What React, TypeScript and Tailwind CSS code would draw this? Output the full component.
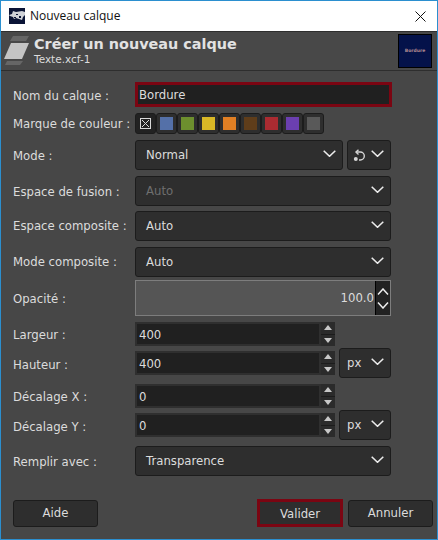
import React from "react";

const dv = { fontFamily: '"DejaVu Sans", sans-serif' };

function Chevron({ className = "" }: { className?: string }) {
  return (
    <svg width="13" height="7" viewBox="0 0 13 7" className={className} fill="none" stroke="#ececec" strokeWidth="1.5">
      <path d="M.7.7l5.8 5.6L12.3.7" />
    </svg>
  );
}

function Combo({ text, disabled, className }: { text: string; disabled?: boolean; className: string }) {
  return (
    <div className={`flex items-center justify-between rounded-[3px] border border-[#1c1c1c] bg-[#2e2e2e] pr-[6px] ${className}`}>
      <span className={`pt-[2px] ${disabled ? "text-[#6f6f6f]" : "text-[#dcdcdc]"}`}>{text}</span>
      <Chevron className="mb-[3px]" />
    </div>
  );
}

function Spin({ value }: { value: string }) {
  return (
    <div className="flex h-[24px] w-[200px]">
      <div className="flex flex-1 items-center border-2 border-[#2f2f2f] bg-[#202020] pl-[2px] pt-[3px] text-[#dcdcdc]">{value}</div>
      <div className="flex w-[14px] flex-col gap-[1px] bg-[#1c1c1c]">
        <div className="flex flex-1 items-center justify-center bg-[#2b2b2b]">
          <svg width="8" height="5" viewBox="0 0 8 5"><path d="M4 0l4 5H0z" fill="#c8c8c8" /></svg>
        </div>
        <div className="flex flex-1 items-center justify-center bg-[#2b2b2b]">
          <svg width="8" height="5" viewBox="0 0 8 5"><path d="M4 5l4-5H0z" fill="#c8c8c8" /></svg>
        </div>
      </div>
    </div>
  );
}

function Label({ children, className = "pt-[3px]" }: { children: string; className?: string }) {
  return <div className={`w-[122px] shrink-0 whitespace-nowrap text-[#dcdcdc] ${className}`}>{children}</div>;
}

const swatches = ["#5470a8", "#6d8f2e", "#d9b826", "#e07f24", "#5f3d1a", "#ab2b31", "#6b3fb0", "#595959"];

export default function App() {
  return (
    <div className="flex h-[540px] w-[438px] flex-col overflow-hidden border border-[#2b8fcf] bg-[#474747] text-[11.7px]" style={dv}>
      {/* Title bar */}
      <div className="flex h-[30px] shrink-0 items-center bg-white pl-[8px] pr-[11px]" style={{ fontFamily: '"Open Sans", sans-serif' }}>
        <svg width="16" height="16" viewBox="0 0 16 16">
          <rect width="16" height="16" fill="#0a1436" />
          <path d="M0 7l3-1 1-3 3 1 6-1 3 1v3l-2 2-1 3-3-1-3-1-2 1-1-2-3-1z" fill="#cfd2d8" />
          <rect x="7" y="6" width="2" height="1" fill="#0a1436" />
          <rect x="10" y="8" width="2" height="2" fill="#0a1436" />
          <rect x="5" y="9" width="2" height="1" fill="#0a1436" />
        </svg>
        <span className="ml-[5px] flex-1 text-[12px] text-[#111]">Nouveau calque</span>
        <svg width="11" height="11" viewBox="0 0 11 11" stroke="#111" strokeWidth="1"><path d="M0.5 0.5l10 10M10.5 0.5l-10 10" /></svg>
      </div>

      {/* Header */}
      <div className="flex h-[40px] shrink-0 items-center border-y border-[#2e2e2e] bg-[#484848] pl-[3px] pr-[5px]">
        <svg width="25" height="30" viewBox="0 0 25 30">
          <path d="M9 0h16l-3 5H6z" fill="#666" />
          <path d="M7 7h18l-7 16H0z" fill="#c4c4c4" />
          <path d="M3 25h16l-3 4H1z" fill="#666" />
        </svg>
        <div className="ml-[5px] flex flex-1 flex-col">
          <span className="text-[14.4px] font-bold leading-[17px] text-[#e2e2e2]">Créer un nouveau calque</span>
          <span className="text-[10.5px] leading-[13px] text-[#dcdcdc]">Texte.xcf-1</span>
        </div>
        <div className="flex h-[34px] w-[34px] items-center justify-center border border-black bg-[#04124a]">
          <span className="text-[4.5px] font-bold leading-none text-[#b08a90]">Bordure</span>
        </div>
      </div>

      {/* Form */}
      <div className="flex flex-1 flex-col pl-[12px] pr-[46px]">
        <div className="mt-[11px] flex h-[25px] items-center">
          <Label className="pt-[4px]">Nom du calque :</Label>
          <div className="flex h-[25px] w-[257px] shrink-0 items-center border-[3px] border-[#7b0512] bg-[#202020] pl-[1px] pt-[3px] text-[#dcdcdc]">Bordure</div>
        </div>

        <div className="mt-[6px] flex h-[21px] items-center">
          <Label className="pt-[2px]">Marque de couleur :</Label>
          <div className="flex">
            <div className="flex h-[21px] w-[21px] items-center justify-center rounded-[3px] border border-[#1c1c1c] bg-[#222]">
              <svg width="11" height="11" viewBox="0 0 11 11" fill="none" stroke="#d8d8d8" strokeWidth="1"><rect x="0.5" y="0.5" width="10" height="10" /><path d="M2 2l7 7M9 2l-7 7" /></svg>
            </div>
            {swatches.map((c) => (
              <div key={c} className="flex h-[21px] w-[21px] items-center justify-center rounded-[3px] border border-[#1c1c1c] bg-[#2e2e2e]">
                <div className="h-[13px] w-[13px]" style={{ backgroundColor: c }} />
              </div>
            ))}
          </div>
        </div>

        <div className="mt-[6px] flex h-[30px] items-center">
          <Label>Mode :</Label>
          <Combo text="Normal" className="h-[30px] w-[208px] pl-[10px]" />
          <div className="ml-[4px] flex h-[30px] w-[44px] items-center justify-between rounded-[3px] border border-[#1c1c1c] bg-[#2e2e2e] pl-[5px] pr-[6px]">
            <svg width="13" height="13" viewBox="0 0 13 13" fill="none" stroke="#d6d6d6" strokeWidth="1.4">
              <path d="M3.5 3h3.8a3.9 3.9 0 0 1 0 8H6" />
              <path d="M5.5.8L3 3l2.5 2.4" />
              <circle cx="2.8" cy="10" r="2" fill="#d6d6d6" stroke="none" />
            </svg>
            <Chevron className="mb-[3px]" />
          </div>
        </div>

        <div className="mt-[6px] flex h-[30px] items-center">
          <Label>Espace de fusion :</Label>
          <Combo text="Auto" disabled className="h-[30px] w-[256px] pl-[10px]" />
        </div>
        <div className="mt-[5px] flex h-[30px] items-center">
          <Label className="pt-[2px]">Espace composite :</Label>
          <Combo text="Auto" className="h-[30px] w-[256px] pl-[10px]" />
        </div>
        <div className="mt-[6px] flex h-[30px] items-center">
          <Label className="pt-[2px]">Mode composite :</Label>
          <Combo text="Auto" className="h-[30px] w-[256px] pl-[10px]" />
        </div>

        <div className="mt-[3px] flex h-[36px] items-center">
          <Label>Opacité :</Label>
          <div className="flex h-[36px] w-[256px] items-stretch border border-[#7d7d7d] bg-[#555555]">
            <div className="flex flex-1 items-center justify-end pr-[1px] pt-[2px] text-[#dcdcdc]">100.0</div>
            <div className="flex w-[15px] flex-col items-center justify-center gap-[7px] border-l border-black bg-[#222]">
              <svg width="12" height="7" viewBox="0 0 12 7" fill="none" stroke="#ececec" strokeWidth="1.5"><path d="M1 6.5L6 1l5 5.5" /></svg>
              <svg width="12" height="7" viewBox="0 0 12 7" fill="none" stroke="#ececec" strokeWidth="1.5"><path d="M1 .5L6 6l5-5.5" /></svg>
            </div>
          </div>
        </div>

        <div className="mt-[6px] flex h-[24px] items-center">
          <Label>Largeur :</Label>
          <Spin value="400" />
        </div>
        <div className="mt-[2px] flex h-[30px] items-center">
          <Label className="pt-[5px]">Hauteur :</Label>
          <Spin value="400" />
          <Combo text="px" className="ml-[4px] h-[30px] w-[52px] pl-[7px]" />
        </div>
        <div className="mt-[6px] flex h-[24px] items-center">
          <Label>Décalage X :</Label>
          <Spin value="0" />
        </div>
        <div className="mt-[2px] flex h-[30px] items-center">
          <Label className="pt-[6px]">Décalage Y :</Label>
          <Spin value="0" />
          <Combo text="px" className="ml-[4px] h-[30px] w-[52px] pl-[7px]" />
        </div>
        <div className="mt-[6px] flex h-[30px] items-center">
          <Label>Remplir avec :</Label>
          <Combo text="Transparence" className="h-[30px] w-[256px] pl-[10px]" />
        </div>
      </div>

      {/* Buttons */}
      <div className="mb-[12px] flex h-[28px] shrink-0 items-center pl-[12px] pr-[4px] text-[#dcdcdc]">
        <div className="flex h-[27px] w-[85px] items-center justify-center rounded-[3px] border border-[#1c1c1c] bg-[#2e2e2e] pt-[2px]">Aide</div>
        <div className="ml-[159px] flex h-[28px] w-[86px] items-center justify-center border-[3px] border-[#7b0512] bg-[#2e2e2e] pt-[3px]">Valider</div>
        <div className="ml-[5px] flex h-[27px] w-[85px] items-center justify-center rounded-[3px] border border-[#1c1c1c] bg-[#2e2e2e] pt-[2px]">Annuler</div>
      </div>
    </div>
  );
}
